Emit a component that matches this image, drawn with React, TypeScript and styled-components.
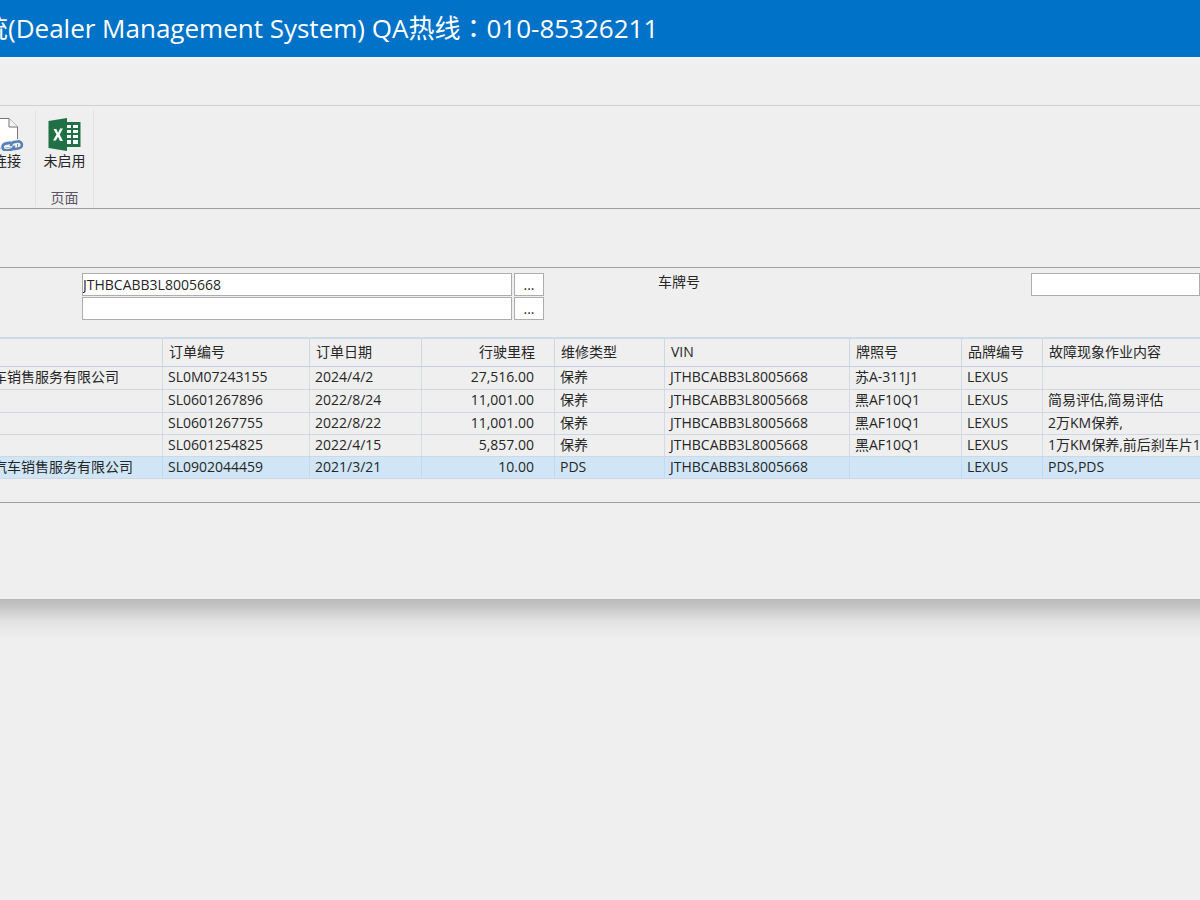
import React from 'react';
import styled, { createGlobalStyle } from 'styled-components';

const GlobalStyle = createGlobalStyle`
  *, *::before, *::after { box-sizing: border-box; }
  body {
    margin: 0;
    background: #efefef;
    color: #262626;
    font-family: "Open Sans", "Noto Sans CJK SC", sans-serif;
    font-size: 14px;
    line-height: 20px;
  }
  button, input { font: inherit; color: inherit; }
`;

const Viewport = styled.div`
  min-height: 100vh;
  overflow: hidden;
`;

const TitleBar = styled.header`
  height: 57px;
  padding-top: 10px;
  overflow: hidden;
  background: #0072c8;
`;

const Title = styled.h1`
  margin: 0 0 0 -18px;
  color: #fff;
  font-size: 26px;
  font-weight: 400;
  line-height: 36px;
  white-space: nowrap;
`;

/* The Traditional face centres the full-width colon in its square. */
const Colon = styled.span`
  font-family: "Noto Sans CJK TC", sans-serif;
  line-height: 1;
`;

const Sheet = styled.main`
  background: #efefef;
`;

const SheetShadow = styled.div`
  height: 40px;
  background: linear-gradient(#b8b8b8, #cdcdcd 30%, #e2e2e2 55%, #efefef);
`;

const TabStrip = styled.div`
  height: 49px;
  border-bottom: 1px solid #cfcfcf;
`;

const Ribbon = styled.div`
  display: flex;
  height: 103px;
  padding-top: 4px;
  border-bottom: 1px solid #9d9d9d;
`;

const RibbonGroup = styled.section<{ $width: number }>`
  display: flex;
  flex-direction: column;
  align-items: center;
  justify-content: space-between;
  width: ${(p) => p.$width}px;
  height: 97px;
  padding-top: 7px;
  border-right: 1px solid #e2e2e4;
`;

const RibbonButton = styled.button<{ $bleed?: boolean }>`
  display: flex;
  flex-direction: column;
  align-items: center;
  align-self: ${(p) => (p.$bleed ? 'flex-start' : 'center')};
  margin-left: ${(p) => (p.$bleed ? '-10px' : '0')};
  padding: 0;
  border: 0;
  background: none;
  white-space: nowrap;

  svg { display: block; }
`;

const GroupName = styled.span`
  color: #5c5563;
  line-height: 18px;
`;

const Heading = styled.div`
  height: 59px;
  border-bottom: 1px solid #a2a2a2;
`;

const Filters = styled.form`
  display: grid;
  grid-template-columns: 82px 462px 114px 373px minmax(120px, 1fr);
  align-content: start;
  row-gap: 1px;
  height: 69px;
  padding-top: 5px;
`;

const Field = styled.div<{ $column: number }>`
  display: flex;
  gap: 2px;
  grid-column: ${(p) => p.$column};
  height: 23px;
`;

const FieldLabel = styled.label`
  grid-column: 4;
  line-height: 18px;
`;

const TextBox = styled.input`
  flex: 1;
  min-width: 0;
  padding: 0;
  border: 1px solid #adadad;
  border-radius: 0;
  background: #fff;
`;

const MoreButton = styled.button`
  width: 30px;
  padding: 0;
  border: 1px solid #adadad;
  background: #fff;
  line-height: 20px;
`;

const GridPanel = styled.section`
  height: 166px;
  border-bottom: 1px solid #9d9d9d;
`;

const Grid = styled.table`
  width: 100%;
  table-layout: fixed;
  border-collapse: separate;
  border-spacing: 0;
  border-top: 2px solid #cfdae8;
`;

const Column = styled.col<{ $width?: number }>`
  width: ${(p) => (p.$width ? `${p.$width}px` : 'auto')};
`;

const HeadCell = styled.th<{ $right?: boolean }>`
  height: 28px;
  padding: 0 ${(p) => (p.$right ? 19 : 0)}px 2px 6px;
  border-right: 1px solid #cfd6e4;
  border-bottom: 1px solid #c3d0e2;
  font-weight: 400;
  line-height: 18px;
  text-align: ${(p) => (p.$right ? 'right' : 'left')};
  white-space: nowrap;

  &:last-child { border-right: 0; }
`;

const Cell = styled.td<{ $right?: boolean }>`
  padding: 0 ${(p) => (p.$right ? 20 : 0)}px 2px 5px;
  border-right: 1px solid #d3d9e6;
  border-bottom: 1px solid #cdd7e6;
  line-height: 18px;
  overflow: hidden;
  text-align: ${(p) => (p.$right ? 'right' : 'left')};
  white-space: nowrap;

  &:first-child {
    padding-left: 0;
    text-indent: -7px;
  }
  &:last-child { border-right: 0; }
`;

const Row = styled.tr<{ $selected?: boolean }>`
  height: 23px;
  background: ${(p) => (p.$selected ? '#d0e6f7' : 'transparent')};

  &:nth-child(n + 3) { height: 22px; }
  ${Cell} { ${(p) => (p.$selected ? 'border-right-color: #c3daf0;' : '')} }
`;

const Footer = styled.footer`
  height: 96px;
`;

const LinkIcon = () => (
  <svg width="34" height="34" viewBox="0 0 34 34" fill="none" aria-hidden="true">
    <path d="M3 1.500H19L27.500 10V31H3Z" fill="#fff" stroke="#777" />
    <path d="M19 1.500V10H27.500" fill="#f4f4f4" stroke="#777" />
    <g transform="rotate(-10 22 29)">
      <path
        d="M21.500 25.500H16a3.800 3.800 0 0 0 0 7.500H20q3.500 0 4-3.500M23 33h5.500a3.800 3.800 0 0 0 0-7.500H25q-3.500 0-4 3.500"
        stroke="#efefef"
        strokeWidth="5"
      />
      <path
        d="M21.500 25.500H16a3.500 3.500 0 0 0 0 7H20q3.500 0 4-3.500M23 32.500h5.500a3.500 3.500 0 0 0 0-7H25q-3.500 0-4 3.500"
        stroke="#5580b8"
        strokeWidth="2.600"
      />
    </g>
  </svg>
);

const ExcelIcon = () => (
  <svg width="34" height="34" viewBox="0 0 34 34" aria-hidden="true">
    <path d="M18 5H32.500V30H18Z" fill="#1f7145" />
    <path
      d="M19 8h4v3h-4zM25 8h5v3h-5zM19 13h4v3h-4zM25 13h5v3h-5zM19 18h4v3h-4zM25 18h5v3h-5zM19 23h4v4h-4zM25 23h5v4h-5z"
      fill="#fff"
    />
    <path d="M0.500 4L19 1V34L0.500 31Z" fill="#1f7145" />
    <path d="M5.500 12h2.800l1.800 3.800 2-4.200h2.900L11.700 17.500 15 24h-3L10 19.700 7.900 23.500H5L8.500 17.600Z" fill="#fff" />
  </svg>
);

const columns: { title: string; width?: number; right?: boolean }[] = [
  { title: '', width: 163 },
  { title: '订单编号', width: 147 },
  { title: '订单日期', width: 112 },
  { title: '行驶里程', width: 133, right: true },
  { title: '维修类型', width: 110 },
  { title: 'VIN', width: 185 },
  { title: '牌照号', width: 112 },
  { title: '品牌编号', width: 81 },
  { title: '故障现象作业内容' },
];

const vin = 'JTHBCABB3L8005668';

const orders = [
  ['车销售服务有限公司', 'SL0M07243155', '2024/4/2', '27,516.00', '保养', vin, '苏A-311J1', 'LEXUS', ''],
  ['', 'SL0601267896', '2022/8/24', '11,001.00', '保养', vin, '黑AF10Q1', 'LEXUS', '简易评估,简易评估'],
  ['', 'SL0601267755', '2022/8/22', '11,001.00', '保养', vin, '黑AF10Q1', 'LEXUS', '2万KM保养,'],
  ['', 'SL0601254825', '2022/4/15', '5,857.00', '保养', vin, '黑AF10Q1', 'LEXUS', '1万KM保养,前后刹车片10'],
  ['汽车销售服务有限公司', 'SL0902044459', '2021/3/21', '10.00', 'PDS', vin, '', 'LEXUS', 'PDS,PDS'],
];

export default function App() {
  return (
    <Viewport>
      <GlobalStyle />
      <TitleBar>
        <Title>
          统(Dealer Management System) QA热线<Colon>：</Colon>010-85326211
        </Title>
      </TitleBar>
      <Sheet>
        <TabStrip />
        <Ribbon>
          <RibbonGroup $width={36}>
            <RibbonButton type="button" $bleed>
              <LinkIcon />
              连接
            </RibbonButton>
          </RibbonGroup>
          <RibbonGroup $width={58}>
            <RibbonButton type="button">
              <ExcelIcon />
              未启用
            </RibbonButton>
            <GroupName>页面</GroupName>
          </RibbonGroup>
        </Ribbon>
        <Heading />
        <Filters onSubmit={(e) => e.preventDefault()}>
          <Field $column={2}>
            <TextBox aria-label="VIN" defaultValue={vin} />
            <MoreButton type="button">...</MoreButton>
          </Field>
          <FieldLabel htmlFor="plate">车牌号</FieldLabel>
          <Field $column={5}>
            <TextBox id="plate" />
          </Field>
          <Field $column={2}>
            <TextBox aria-label="订单编号" />
            <MoreButton type="button">...</MoreButton>
          </Field>
        </Filters>
        <GridPanel>
          <Grid>
            <colgroup>
              {columns.map((c, i) => (
                <Column key={i} $width={c.width} />
              ))}
            </colgroup>
            <thead>
              <tr>
                {columns.map((c, i) => (
                  <HeadCell key={i} scope="col" $right={c.right}>
                    {c.title}
                  </HeadCell>
                ))}
              </tr>
            </thead>
            <tbody>
              {orders.map((order, r) => (
                <Row key={order[1]} $selected={r === orders.length - 1}>
                  {order.map((value, i) => (
                    <Cell key={i} $right={columns[i].right}>
                      {value}
                    </Cell>
                  ))}
                </Row>
              ))}
            </tbody>
          </Grid>
        </GridPanel>
        <Footer />
      </Sheet>
      <SheetShadow />
    </Viewport>
  );
}
